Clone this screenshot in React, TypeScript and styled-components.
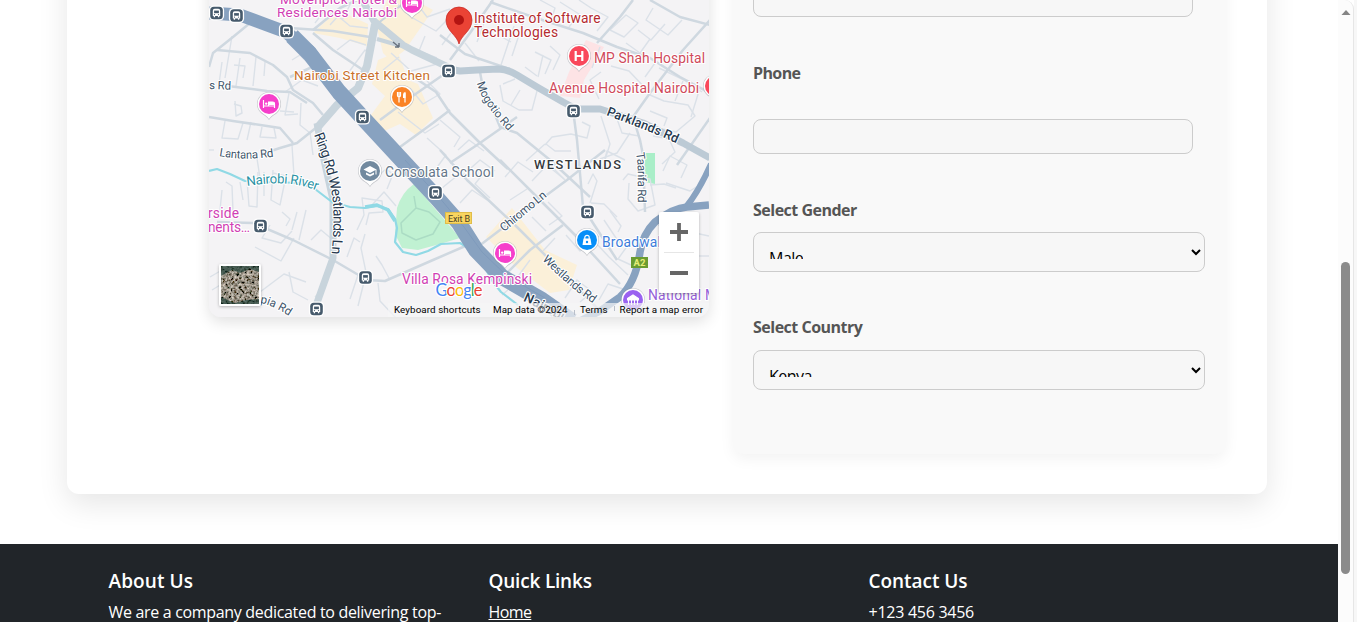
import React from "react";
import styled, { createGlobalStyle } from "styled-components";

const GlobalStyle = createGlobalStyle`
  *, *::before, *::after { box-sizing: border-box; }
  body {
    margin: 0;
    background: #fff;
    overflow: hidden;
    font-family: "Open Sans", "Noto Sans", sans-serif;
    font-size: 16px;
  }
`;

const Viewport = styled.div`
  display: flex;
  height: 622px;
  overflow: hidden;
`;

const Page = styled.div`
  flex: 1;
  min-width: 0;
  overflow: hidden;
`;

const ContactCard = styled.section`
  display: flex;
  align-items: flex-start;
  width: 1200px;
  height: 554px;
  margin: -60px 0 50px 67px;
  padding: 0 41px 0 142px;
  gap: 24px;
  background: #fff;
  border-radius: 12px;
  box-shadow: 0 10px 30px rgba(0, 0, 0, 0.1);
`;

const MapFrame = styled.div`
  width: 500px;
  height: 377px;
  padding-top: 60px;
  border-radius: 12px;
  background: #f4f3f5;
  box-shadow: 0 5px 15px rgba(0, 0, 0, 0.12);
  overflow: hidden;
`;

const MapDrawing = styled.svg`
  display: block;
  width: 500px;
  height: 318px;
  font-family: Roboto, sans-serif;
`;

const FormPanel = styled.form`
  width: 493px;
  height: 514px;
  padding: 42px 20px 0;
  background: #f9f9f9;
  border-radius: 10px;
  box-shadow: 0 5px 15px rgba(0, 0, 0, 0.05);
`;

const Label = styled.label<{ $gap: number; $spacing: number }>`
  display: block;
  height: 23px;
  margin-bottom: ${(p) => p.$gap}px;
  color: #555;
  font-weight: 700;
  line-height: 23px;
  letter-spacing: ${(p) => p.$spacing}px;
  white-space: nowrap;
`;

const Input = styled.input`
  display: block;
  width: 440px;
  height: 35px;
  margin: 0 0 45px;
  padding: 0 10px;
  border: 1px solid #ccc;
  border-radius: 8px;
  background: #f7f7f7;
`;

const SelectBox = styled.div`
  display: flex;
  justify-content: space-between;
  width: 452px;
  height: 40px;
  margin-bottom: 44px;
  padding: 14px 3px 0 15px;
  border: 1px solid #ccc;
  border-radius: 8px;
  background: #f7f7f7;
`;

const SelectValue = styled.span`
  height: 12px;
  overflow: hidden;
  color: #000;
  line-height: 22px;
  letter-spacing: -0.5px;
`;

const Chevron = styled.svg`
  width: 10px;
  height: 8px;
  margin-top: 1px;
`;

const Footer = styled.footer`
  display: grid;
  grid-template-columns: repeat(3, 380px);
  height: 140px;
  padding: 23px 0 0 108.5px;
  background: #212529;
  color: #fff;
`;

const FooterTitle = styled.h5<{ $spacing: number }>`
  margin: 0 0 5px;
  font-size: 19px;
  font-weight: 600;
  line-height: 28px;
  letter-spacing: ${(p) => p.$spacing}px;
`;

const FooterText = styled.p<{ $spacing: number }>`
  margin: 0;
  line-height: 24px;
  letter-spacing: ${(p) => p.$spacing}px;
  white-space: nowrap;
`;

const FooterLink = styled.a`
  color: #fff;
  line-height: 24px;
  letter-spacing: -0.6px;
  text-decoration: underline;
`;

const ScrollTrack = styled.div`
  display: flex;
  flex-direction: column;
  align-items: center;
  width: 16px;
  padding-top: 9px;
  background: #fcfcfc;
  border-right: 1px solid #e6e6e6;
  border-top-right-radius: 9px;
`;

const ScrollThumb = styled.div`
  width: 9px;
  height: 312px;
  margin-top: 247px;
  border-radius: 5px;
  background: #8b8b8b;
`;

const WindowEdge = styled.div`
  width: 3px;
  background: #f7f7f7;
`;

const Halo = styled.text<{ $size: number; $color: string; $weight?: number }>`
  font-size: ${(p) => p.$size}px;
  font-weight: ${(p) => p.$weight ?? 400};
  fill: ${(p) => p.$color};
  stroke: #fff;
  stroke-width: 2.2px;
  stroke-linejoin: round;
  paint-order: stroke;
`;

const Roads = styled.g<{ $color: string; $width: number }>`
  fill: none;
  stroke: ${(p) => p.$color};
  stroke-width: ${(p) => p.$width};
  stroke-linejoin: round;
  stroke-linecap: butt;
`;

const NEAR = [
  "M209 67L213 53L233 37L250 23", "M217 50L250 53L273 65L287 77L293 90L313 103L323 115",
  "M228 86L267 91L290 92L307 103", "M290 77L310 68L326 66", "M209 117L233 121L267 126L280 128L293 143",
  "M262 154L280 148L297 143L317 127", "M290 28L333 31L370 37", "M313 33L333 50L363 70",
  "M313 30L340 8L357 0", "M380 120L407 100L440 77L455 66", "M400 147L433 123L450 110",
  "M418 80L436 92L450 113L480 143L508 169", "M490 2L533 17L583 33L617 47L650 58L680 77L710 93",
  "M450 60L470 33L493 0", "M633 0L620 17L597 43", "M650 0L680 17L710 25", "M710 20L683 50L650 93L633 117",
  "M573 110L577 140L583 207L593 223L617 260", "M480 72L482 83L500 127L517 133L550 160L590 197",
  "M633 117L640 140L643 155L645 212", "M450 163L480 143L517 117", "M677 165L710 118",
  "M440 150L467 180L517 227L550 260L600 311", "M500 160L533 193L577 237L620 284",
  "M475 249L500 230L517 217L567 180L605 150", "M217 222L253 223L293 240L333 260L367 280L385 281L433 260L470 244",
  "M495 285L530 250L563 225", "M440 35L465 54L510 69",
];

const THIN = [
  "M225 78L232 36", "M240 58L236 86", "M222 62L219 84", "M256 57L253 86", "M265 62L264 76", "M234 65L245 66L243 78",
  "M235 101L236 116L242 113L241 106L234 104", "M225 121L222 138L238 139L243 123", "M251 122L247 140", "M262 127L260 137L276 138L274 128",
  "M289 93L285 115L298 114", "M280 111L294 112", "M301 103L300 125L310 133", "M256 152L260 178", "M292 145L294 176", "M310 132L313 155",
  "M214 150L209 150", "M285 92L302 80L318 86", "M292 60L300 55L315 70", "M247 180L249 206L257 207L258 172",
  "M273 170L271 200L280 205L286 176L273 173", "M222 190L220 210L233 211L232 186L226 182", "M240 182L243 200", "M264 172L264 196",
  "M282 212L290 219L286 226", "M270 225L262 238L281 243L292 231", "M255 247L281 261L294 238", "M297 212L292 230", "M306 210L299 240",
  "M311 240L321 230L333 240L330 254", "M358 275L350 299", "M365 278L358 306", "M378 283L380 301L396 318", "M347 257L354 238L360 242",
  "M357 230L364 215L362 198L382 201L383 212L369 213L366 225", "M367 277L361 248L365 234", "M390 280L382 265L376 256",
  "M212 290L230 279L234 264", "M210 277L222 270", "M260 292L284 274L306 282", "M289 272L293 292L308 300", "M315 297L325 287",
  "M371 182L386 169L393 174L387 189", "M372 205L384 192L396 206", "M330 25L338 16L350 26L368 28", "M325 10L315 23", "M337 50L350 40L366 45",
  "M346 76L365 50L370 54", "M350 5L342 20", "M393 0L411 17L436 31L456 11", "M418 5L427 17L450 9", "M391 53L411 71L437 64", "M383 70L399 57",
  "M410 88L423 104L440 94L427 81", "M398 112L425 133L439 124", "M427 138L446 155L438 166", "M440 120L460 137L454 147",
  "M425 36L419 51L437 58", "M451 33L442 45", "M465 43L479 61", "M484 23L477 42", "M514 26L501 65", "M524 20L512 56", "M502 37L511 42",
  "M535 52L551 60L545 74", "M543 55L538 77", "M550 46L560 55L553 70", "M525 67L537 76", "M560 2L579 14L569 27", "M579 0L591 8L608 17L597 31",
  "M540 0L555 8L550 24", "M610 30L626 15L638 23L624 37L610 30", "M638 30L651 40L665 24", "M653 8L646 20L668 35L682 20", "M626 43L640 53L650 39",
  "M585 45L578 66", "M600 47L592 68", "M611 66L629 71L646 89", "M601 72L590 80L599 99", "M655 63L645 77", "M659 68L684 80L702 92",
  "M650 95L664 101L688 105L695 116L676 132L653 127", "M683 81L675 101", "M699 91L691 117", "M650 111L667 118L664 126",
  "M500 85L503 101L519 110L532 110L537 91", "M503 84L515 79", "M520 90L511 105", "M545 145L552 137L571 134L587 138L590 126L582 122",
  "M571 151L555 151L546 144", "M601 116L610 144L604 163", "M616 116L622 133L639 136", "M653 136L669 139L675 152L662 164", "M630 133L617 153L600 159",
  "M458 150L469 140L484 151", "M463 175L480 160L495 171", "M442 188L463 171", "M487 169L475 184L490 198", "M505 177L518 162L533 172",
  "M526 161L545 144", "M532 181L547 165L564 179", "M510 200L527 189", "M460 203L472 190L487 200", "M565 180L544 159",
  "M623 180L628 174L650 179L655 205L638 211L628 199L629 183", "M663 171L670 156L687 165L681 178", "M666 183L690 191L704 182",
  "M650 185L664 184L676 188", "M602 170L607 151L625 160", "M588 184L593 174L597 181L590 203", "M591 203L604 204L617 217",
  "M548 202L562 216L549 225", "M532 217L546 231", "M604 220L618 241L630 248", "M610 211L621 226L618 232", "M595 242L609 257L628 275",
  "M628 245L618 259L631 265", "M599 236L580 251L566 235", "M555 238L543 251", "M530 260L519 275L532 283", "M502 295L522 278",
  "M565 298L577 280L590 290", "M599 300L608 284L623 289", "M580 302L593 291", "M658 225L709 236", "M686 239L698 256L709 256",
];

const STOPS: [number, number][] = [
  [216.5, 13], [236.5, 15.5], [286.5, 31], [448.5, 71], [362.5, 117], [573.5, 111],
  [435.5, 192.5], [260.5, 226], [365.5, 277.5], [316.5, 309], [587.5, 212],
];

const BusStop = ({ x, y }: { x: number; y: number }) => (
  <g transform={`translate(${x} ${y})`}>
    <rect x="-7.6" y="-7.6" width="15.2" height="15.2" rx="4.6" fill="#fff" />
    <rect x="-6.3" y="-6.3" width="12.6" height="12.6" rx="3.6" fill="#465a6c" />
    <path d="M-3.7 3V-2.3Q-3.7-4.2-1.8-4.2H1.8Q3.7-4.2 3.7-2.3V3H2.8V4.3H1.4V3H-1.4V4.3H-2.8V3Z" fill="#fff" />
    <rect x="-2.4" y="-2.4" width="4.8" height="2.6" fill="#465a6c" />
    <circle cx="-2" cy="1.6" r=".6" fill="#465a6c" /><circle cx="2" cy="1.6" r=".6" fill="#465a6c" />
  </g>
);

const Pin = ({ x, y, color, children }: { x: number; y: number; color: string; children: React.ReactNode }) => (
  <g transform={`translate(${x} ${y})`}>
    <path d="M0 16C-2 12.700-4 12.200-7.800 9.200A12 12 0 1 1 7.800 9.200C4 12.200 2 12.700 0 16Z" fill="#8a8f96" opacity=".45" />
    <path d="M0 15C-2 11.800-4 11.200-7.400 8.600A11.400 11.400 0 1 1 7.400 8.600C4 11.200 2 11.800 0 15Z" fill="#fff" />
    <circle r="10" fill={color} />
    {children}
  </g>
);

const HotelPin = ({ x, y }: { x: number; y: number }) => (
  <Pin x={x} y={y} color="#f63fcb">
    <path d="M-5.500-4V4M-5.500 2H5.500M5.500 4V0Q5.500-2 3.500-2H-.4V2" fill="none" stroke="#fff" strokeWidth="1.200" />
    <circle cx="-2.800" cy="-.4" r="1.200" fill="#fff" />
    <path d="M0-2H3.500Q5.500-2 5.500 0V1H0Z" fill="#fff" />
  </Pin>
);

const AreaMap = () => (
  <MapDrawing viewBox="209 0 500 318" role="img" aria-label="Map">
    <defs>
      <path id="ring" d="M314 135C320 150 328 172 332 195C335 215 333 238 331 262" />
      <path id="mogotio" d="M477 83C480 97 490 111 510 133" />
      <path id="parklands" d="M606 115C629 124 650 131 680 145" />
      <path id="lantana" d="M219 156C235 159 250 160 278 156" />
      <path id="river" d="M247 186C270 183 292 180 320 192" />
      <path id="chiromo" d="M504 232L550 194" />
      <path id="westlandsRd" d="M542 260C557 274 570 288 597 306" />
      <path id="taarifa" d="M636 153C639 170 637 185 638 208" />
      <path id="nairobiExp" d="M523 301Q536 306 565 323" />
      <path id="olympia" d="M260 303Q273 305 292 318" />
      <filter id="ground" x="0" y="0" width="1" height="1">
        <feTurbulence type="fractalNoise" baseFrequency=".38" numOctaves="3" seed="7" />
        <feColorMatrix values="1.300 0 0 0 -.34 1.200 .1 0 0 -.37 1.100 .1 0 0 -.37 0 0 0 0 1" />
      </filter>
      <filter id="soft" x="-.3" y="-.3" width="1.6" height="1.6">
        <feDropShadow dx="0" dy="1" stdDeviation="1.5" floodOpacity=".28" />
      </filter>
    </defs>
    <rect x="209" width="500" height="318" fill="#f4f3f5" />

    <g fill="#fbf0d9">
      <path d="M387 0H415L433 10L405 50L391 61L383 53L376 24ZM313 33L338 10L368 24L367 46L340 38ZM378 60L398 52L408 80L418 84L433 118L416 135L400 124L380 133L368 119L385 96L372 84Z" />
      <path d="M486 237L512 208L545 250L577 265L569 290L550 293L517 268Z" />
    </g>
    <path d="M586 40L604 47L584 80L580 98L560 96L569 72Z" fill="#fde3e5" />
    <path d="M645 153H655V184L645 182Z" fill="#a9eec8" />
    <path d="M414 184L460 238L440 244L418 250L402 248L395 234L397 208Q402 192 414 184Z" fill="#c0f1d2" />

    <Roads $color="#dbe1e8" $width={1.4}>{THIN.map((d) => <path key={d} d={d} />)}</Roads>
    <Roads $color="#cfd8e0" $width={2.5}>{NEAR.map((d) => <path key={d} d={d} />)}</Roads>
    <Roads $color="#abdcc4" $width={1.5}>
      <path d="M416 208L401 223L402 233L416 240L433 234L440 222L429 212L416 208L414 196" />
    </Roads>
    <Roads $color="#c8d4dc" $width={7}>
      <path d="M317 128L337 105L358 88L367 66L375 24" strokeWidth="8" />
      <path d="M360 -4L374 21L403 45L412 50L448 67" />
      <path d="M377 39L401 46" strokeWidth="4" />
      <path d="M377 24L408 0" strokeWidth="2" />
      <path d="M317 123L324 160L333 200L333 258L313 314" />
    </Roads>
    <Roads $color="#bccad5" $width={7}>
      <path d="M442 68L460 71L477 70L498 69Q507 69 517 75L537 87L563 102L576 109L600 109L643 123L683 143L710 158" />
    </Roads>
    <Roads $color="#90d9e5" $width={2.2}>
      <path d="M209 171L217 169L230 174L245 181L270 182L300 183L315 189L332 202L350 207L365 208L377 206L388 209L395 219L397 228L395 242L403 252L416 255L428 251L441 244L460 243L470 249L480 259L493 282L501 292L518 305" />
      <path d="M365 207L377 205L388 210L395 221" strokeWidth="3.500" />
    </Roads>
    <Roads $color="#88a2c0" $width={13}>
      <path d="M209 13L240 15L267 25L286 32L309 51L339 93L362 117L399 157L436 197L459 223L476 250L502 277L542 300L572 321" />
      <path d="M292 36L310 54L339 92L362 117L399 157L436 197L459 223L476 250L502 277L542 300L572 321" strokeWidth="16" />
      <path d="M576 323L600 311L620 297Q636 282 640 252Q643 234 655 222Q673 208 687 207L709 205" strokeWidth="7.500" />
      <path d="M686 207Q699 191 711 164" strokeWidth="6" />
    </Roads>
    <Roads $color="#7c98ba" $width={0.8}>
      <path d="M405 160L438 196L464 227L482 252L507 276L545 298" />
    </Roads>
    <path d="M393 42L399 47M399 47V43M399 47H395" stroke="#68737f" strokeWidth="1.400" fill="none" />

    {STOPS.map(([x, y]) => <BusStop key={`${x}-${y}`} x={x} y={y} />)}

    <Halo $size={14} $color="#26394f"><textPath href="#ring" textLength="122">Ring Rd Westlands Ln</textPath></Halo>
    <Halo $size={11.5} $color="#40546a"><textPath href="#mogotio" textLength="58">Mogotio Rd</textPath></Halo>
    <Halo $size={12.8} $color="#26394f" $weight={500}><textPath href="#parklands" textLength="76">Parklands Rd</textPath></Halo>
    <Halo $size={11.5} $color="#40546a"><textPath href="#lantana" textLength="55">Lantana Rd</textPath></Halo>
    <Halo $size={13.3} $color="#2b93a5"><textPath href="#river" textLength="71">Nairobi River</textPath></Halo>
    <Halo $size={11.8} $color="#40546a"><textPath href="#chiromo" textLength="56">Chiromo Ln</textPath></Halo>
    <Halo $size={11.8} $color="#40546a"><textPath href="#westlandsRd" textLength="67">Westlands Rd</textPath></Halo>
    <Halo $size={11.8} $color="#40546a"><textPath href="#taarifa" textLength="50">Taarifa Rd</textPath></Halo>
    <Halo $size={13.5} $color="#26394f" $weight={500}><textPath href="#nairobiExp">Nairobi</textPath></Halo>
    <Halo $size={11.5} $color="#40546a"><textPath href="#olympia">pia Rd</textPath></Halo>
    <Halo $size={11.5} $color="#40546a" x="209" y="89" textLength="22" transform="rotate(2 209 89)">s Rd</Halo>

    <Halo $size={13.5} $color="#d13fb4" x="280" y="3.500" textLength="117">Mövenpick Hotel &amp;</Halo>
    <Halo $size={13.5} $color="#d13fb4" x="277" y="17" textLength="120">Residences Nairobi</Halo>
    <Halo $size={13.5} $color="#c96f2a" x="294" y="80" textLength="136">Nairobi Street Kitchen</Halo>
    <Halo $size={13.8} $color="#b42b30" x="474" y="23" textLength="126.500">Institute of Software</Halo>
    <Halo $size={13.8} $color="#b42b30" x="474" y="37" textLength="84">Technologies</Halo>
    <Halo $size={13.8} $color="#d04a5b" x="594" y="63" textLength="111">MP Shah Hospital</Halo>
    <Halo $size={13.8} $color="#d04a5b" x="549" y="93" textLength="150">Avenue Hospital Nairobi</Halo>
    <Halo $size={12.8} $color="#34383c" $weight={500} x="534" y="168.500" textLength="87">WESTLANDS</Halo>
    <Halo $size={13.8} $color="#667789" x="385" y="177" textLength="109">Consolata School</Halo>
    <Halo $size={13.8} $color="#d13fb4" x="208" y="218" textLength="31">rside</Halo>
    <Halo $size={13.8} $color="#d13fb4" x="208" y="232" textLength="42">nents…</Halo>
    <Halo $size={13.8} $color="#d13fb4" x="402" y="284" textLength="130">Villa Rosa Kempinski</Halo>
    <Halo $size={13.8} $color="#3d7ddb" x="602" y="247" textLength="66">Broadwalk</Halo>
    <Halo $size={13.8} $color="#9560d8" x="648" y="300" textLength="112">National Museum</Halo>

    <rect x="445.500" y="212.500" width="26" height="11" fill="#f9d560" stroke="#e0bd4a" />
    <text x="448" y="221.500" fontSize="9" textLength="22" fill="#4a4125">Exit B</text>
    <rect x="631" y="257" width="17" height="11" fill="#6a9c31" />
    <text x="633.500" y="266.300" fontSize="9.500" fontWeight="700" textLength="12" fill="#e6ee78">A2</text>

    <HotelPin x={412} y={3} />
    <HotelPin x={269} y={104} />
    <HotelPin x={505} y={253} />
    <Pin x={402} y={97} color="#fa8326">
      <path d="M-4.500-5V-1.500Q-4.500 0-3 0T-1.500-1.500V-5M-3-5V5.500M3 5.500V-4" fill="none" stroke="#fff" strokeWidth="1.200" />
      <path d="M3.500-5.200V1H1V-2.500Q1-4.600 3.500-5.200Z" fill="#fff" />
    </Pin>
    <Pin x={579} y={56} color="#f9485b">
      <path d="M-3.300-5V5M3.300-5V5M-3.300 0H3.300" stroke="#fff" strokeWidth="2.200" />
    </Pin>
    <Pin x={715} y={86} color="#f9485b">{null}</Pin>
    <Pin x={370} y={171} color="#728a9f">
      <path d="M-6.500-1.500L0-5L6.500-1.500L0 2ZM-4 1.400L0 3.500L4 1.400V3.500L0 5.600L-4 3.500Z" fill="#fff" />
      <path d="M6-1.500V3.500" stroke="#fff" />
    </Pin>
    <Pin x={587} y={240} color="#078ff8">
      <path d="M-3.500-1.500H3.500L4.500 5H-4.500Z" fill="#fff" />
      <path d="M-2.200-1V-2.500A2.200 2.200 0 0 1 2.200-2.500V-1" fill="none" stroke="#fff" strokeWidth="1.200" />
      <circle cy="2" r="1.200" fill="#078ff8" />
    </Pin>
    <Pin x={633} y={300} color="#9a62f0">
      <path d="M-5.500-1.500L0-5L5.500-1.500V0H-5.500ZM-4.500 0V5M-1.500 0V5M1.500 0V5M4.500 0V5" fill="#fff" stroke="#fff" strokeWidth="1.100" />
    </Pin>

    <path d="M459 44C457 35 446 31 446 20A13 13 0 0 1 472 20C472 31 461 35 459 44Z" fill="#ea4335" stroke="#c5221f" strokeWidth=".7" />
    <circle cx="459" cy="20" r="5" fill="#b31412" />

    <g fontFamily="Lato, sans-serif" fontSize="16.500" fontWeight="400" stroke="#fff" strokeWidth="2.500" paintOrder="stroke">
      <text x="435.500" y="296" textLength="47">
        <tspan fill="#4285f4">G</tspan><tspan fill="#ea4335">o</tspan><tspan fill="#fbbc04">o</tspan><tspan fill="#4285f4">g</tspan><tspan fill="#34a853">l</tspan><tspan fill="#ea4335">e</tspan>
      </text>
    </g>

    <rect x="388" y="303" width="321" height="15" fill="#f5f5f7" opacity=".7" />
    <g fontSize="9.800" fill="#000">
      <text x="394" y="313" textLength="86.500">Keyboard shortcuts</text>
      <text x="493" y="313" textLength="74.500">Map data ©2024</text>
      <text x="580" y="313" textLength="27.500">Terms</text>
      <text x="619.500" y="313" textLength="83.500">Report a map error</text>
    </g>
    <path d="M574.500 310V315M614.500 306V311" stroke="#b9bfca" />

    <rect x="219" y="264" width="42" height="42" rx="2" fill="#fff" filter="url(#soft)" />
    <rect x="221" y="266" width="38" height="38" fill="#5a5a4b" filter="url(#ground)" />
    <path d="M221 266H259V272L250 269L240 273L232 270L221 276ZM221 304H259V299L246 300L235 303L221 297Z" fill="#173b32" opacity=".65" />

    <rect x="659" y="212" width="40" height="81" rx="2" fill="#fff" filter="url(#soft)" />
    <path d="M664 252.500H694" stroke="#e6e6e6" />
    <path d="M670 232H688M679 223V241M670 273H688" stroke="#666" strokeWidth="3.800" />
  </MapDrawing>
);

const Select = ({ value }: { value: string }) => (
  <SelectBox role="combobox" aria-expanded="false">
    <SelectValue>{value}</SelectValue>
    <Chevron viewBox="0 0 10 8"><path d="M1 2L5 6L9 2" fill="none" stroke="#000" strokeWidth="2" /></Chevron>
  </SelectBox>
);

export default function App() {
  return (
    <>
      <GlobalStyle />
      <Viewport>
        <Page>
          <ContactCard>
            <MapFrame><AreaMap /></MapFrame>
            <FormPanel>
              <Input aria-label="Email" />
              <Label $gap={34} $spacing={-0.6}>Phone</Label>
              <Input aria-label="Phone" />
              <Label $gap={10} $spacing={-0.5}>Select Gender</Label>
              <Select value="Male" />
              <Label $gap={11} $spacing={-0.5}>Select Country</Label>
              <Select value="Kenya" />
            </FormPanel>
          </ContactCard>
          <Footer>
            <div>
              <FooterTitle $spacing={0.1}>About Us</FooterTitle>
              <FooterText $spacing={-0.32}>We are a company dedicated to delivering top-</FooterText>
            </div>
            <div>
              <FooterTitle $spacing={-0.2}>Quick Links</FooterTitle>
              <FooterLink>Home</FooterLink>
            </div>
            <div>
              <FooterTitle $spacing={-0.05}>Contact Us</FooterTitle>
              <FooterText $spacing={-0.27}>+123 456 3456</FooterText>
            </div>
          </Footer>
        </Page>
        <ScrollTrack>
          <svg width="10" height="6" viewBox="0 0 10 6"><path d="M.5 6L5 1L9.500 6Z" fill="#858585" /></svg>
          <ScrollThumb />
        </ScrollTrack>
        <WindowEdge />
      </Viewport>
    </>
  );
}
